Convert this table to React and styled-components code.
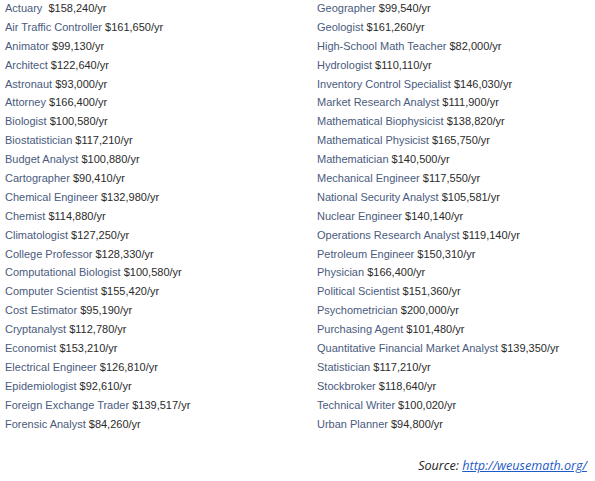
import React from "react";
import styled, { createGlobalStyle } from "styled-components";

const left = [
  ["Actuary ", "$158,240/yr"],
  ["Air Traffic Controller", "$161,650/yr"],
  ["Animator", "$99,130/yr"],
  ["Architect", "$122,640/yr"],
  ["Astronaut", "$93,000/yr"],
  ["Attorney", "$166,400/yr"],
  ["Biologist", "$100,580/yr"],
  ["Biostatistician", "$117,210/yr"],
  ["Budget Analyst", "$100,880/yr"],
  ["Cartographer", "$90,410/yr"],
  ["Chemical Engineer", "$132,980/yr"],
  ["Chemist", "$114,880/yr"],
  ["Climatologist", "$127,250/yr"],
  ["College Professor", "$128,330/yr"],
  ["Computational Biologist", "$100,580/yr"],
  ["Computer Scientist", "$155,420/yr"],
  ["Cost Estimator", "$95,190/yr"],
  ["Cryptanalyst", "$112,780/yr"],
  ["Economist", "$153,210/yr"],
  ["Electrical Engineer", "$126,810/yr"],
  ["Epidemiologist", "$92,610/yr"],
  ["Foreign Exchange Trader", "$139,517/yr"],
  ["Forensic Analyst", "$84,260/yr"],
];

const right = [
  ["Geographer", "$99,540/yr"],
  ["Geologist", "$161,260/yr"],
  ["High-School Math Teacher", "$82,000/yr"],
  ["Hydrologist", "$110,110/yr"],
  ["Inventory Control Specialist", "$146,030/yr"],
  ["Market Research Analyst", "$111,900/yr"],
  ["Mathematical Biophysicist", "$138,820/yr"],
  ["Mathematical Physicist", "$165,750/yr"],
  ["Mathematician", "$140,500/yr"],
  ["Mechanical Engineer", "$117,550/yr"],
  ["National Security Analyst", "$105,581/yr"],
  ["Nuclear Engineer", "$140,140/yr"],
  ["Operations Research Analyst", "$119,140/yr"],
  ["Petroleum Engineer", "$150,310/yr"],
  ["Physician", "$166,400/yr"],
  ["Political Scientist", "$151,360/yr"],
  ["Psychometrician", "$200,000/yr"],
  ["Purchasing Agent", "$101,480/yr"],
  ["Quantitative Financial Market Analyst", "$139,350/yr"],
  ["Statistician", "$117,210/yr"],
  ["Stockbroker", "$118,640/yr"],
  ["Technical Writer", "$100,020/yr"],
  ["Urban Planner", "$94,800/yr"],
];

const GlobalStyle = createGlobalStyle`
  body {
    margin: 0;
    background: #fff;
    font-family: "Liberation Sans", Arial, sans-serif;
  }
`;

const Page = styled.div`
  width: 595px;
  height: 481px;
  box-sizing: border-box;
  padding: 0 8px 0 5px;
  display: flex;
  flex-direction: column;
`;

const Columns = styled.div`
  display: grid;
  grid-template-columns: 312px 1fr;
`;

const List = styled.div`
  display: flex;
  flex-direction: column;
`;

const Row = styled.div`
  height: 18.9px;
  line-height: 16px;
  font-size: 11px;
  white-space: pre;
`;

const Job = styled.span`
  color: #4a5b7e;
`;

const Pay = styled.span`
  color: #2b2b2b;
`;

const Source = styled.div`
  margin-top: 23px;
  text-align: right;
  font-family: "Open Sans", sans-serif;
  font-style: italic;
  font-size: 12.6px;
  color: #222;
`;

const Link = styled.a`
  color: #1f5bc6;
  text-decoration: underline;
`;

const Column = ({ items }) => (
  <List>
    {items.map(([job, pay]) => (
      <Row key={job}>
        <Job>{job}</Job> <Pay>{pay}</Pay>
      </Row>
    ))}
  </List>
);

export default function App() {
  return (
    <>
      <GlobalStyle />
      <Page>
        <Columns>
          <Column items={left} />
          <Column items={right} />
        </Columns>
        <Source>
          Source: <Link href="#">http://weusemath.org/</Link>
        </Source>
      </Page>
    </>
  );
}
